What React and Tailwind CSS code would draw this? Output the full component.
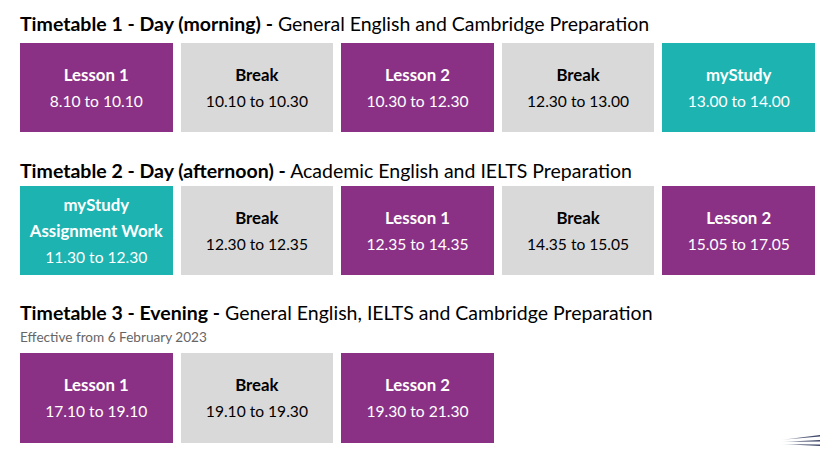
import React from "react";

const PURPLE = "bg-[#8a3186] text-white";
const GRAY = "bg-[#d9d9d9] text-black";
const TEAL = "bg-[#1db3b1] text-white";

function Box({ kind, title, lines = [], time }) {
  const cls = kind === "p" ? PURPLE : kind === "t" ? TEAL : GRAY;
  return (
    <div className={`${cls} flex flex-col items-center justify-center text-center`}>
      {[title, ...lines].map((l, i) => (
        <div key={i} className="font-bold text-[16.8px] leading-[26px]">{l}</div>
      ))}
      <div className="text-[15.6px] leading-[26px]">{time}</div>
    </div>
  );
}

function Heading({ bold, rest }) {
  return (
    <div className="text-[19.5px] leading-[24px] text-black">
      <span className="font-bold">{bold}</span>
      <span> {rest}</span>
    </div>
  );
}

export default function App() {
  return (
    <div
      className="relative w-[820px] h-[452px] bg-white overflow-hidden px-[20px] pt-[12px]"
      style={{ fontFamily: "Lato, 'Liberation Sans', sans-serif" }}
    >
      <Heading bold="Timetable 1 - Day (morning) -" rest="General English and Cambridge Preparation" />
      <div className="mt-[7px] grid grid-cols-5 gap-[8px] w-[795px] h-[89px]">
        <Box kind="p" title="Lesson 1" time="8.10 to 10.10" />
        <Box kind="g" title="Break" time="10.10 to 10.30" />
        <Box kind="p" title="Lesson 2" time="10.30 to 12.30" />
        <Box kind="g" title="Break" time="12.30 to 13.00" />
        <Box kind="t" title="myStudy" time="13.00 to 14.00" />
      </div>

      <div className="mt-[27px]">
        <Heading bold="Timetable 2 - Day (afternoon) -" rest="Academic English and IELTS Preparation" />
      </div>
      <div className="mt-[3px] grid grid-cols-5 gap-[8px] w-[795px] h-[89px]">
        <Box kind="t" title="myStudy" lines={["Assignment Work"]} time="11.30 to 12.30" />
        <Box kind="g" title="Break" time="12.30 to 12.35" />
        <Box kind="p" title="Lesson 1" time="12.35 to 14.35" />
        <Box kind="g" title="Break" time="14.35 to 15.05" />
        <Box kind="p" title="Lesson 2" time="15.05 to 17.05" />
      </div>

      <div className="mt-[26px]">
        <Heading bold="Timetable 3 - Evening -" rest="General English, IELTS and Cambridge Preparation" />
      </div>
      <div className="mt-[2px] text-[13.6px] leading-[20px] text-[#666666]">Effective from 6 February 2023</div>
      <div className="mt-[6px] grid grid-cols-5 gap-[8px] w-[795px] h-[90px]">
        <Box kind="p" title="Lesson 1" time="17.10 to 19.10" />
        <Box kind="g" title="Break" time="19.10 to 19.30" />
        <Box kind="p" title="Lesson 2" time="19.30 to 21.30" />
      </div>

      <svg className="absolute right-0 bottom-[4px]" width="40" height="16" viewBox="0 0 40 16">
        <defs>
          <linearGradient id="g" x1="0" x2="1" y1="0" y2="0">
            <stop offset="0" stopColor="#3a4366" stopOpacity="0" />
            <stop offset="0.5" stopColor="#3a4366" stopOpacity="0.8" />
            <stop offset="1" stopColor="#3a4366" stopOpacity="1" />
          </linearGradient>
        </defs>
        <path d="M0 8 L40 3 L40 4.5 Z" fill="url(#g)" />
        <path d="M0 10 L40 8 L40 9.5 Z" fill="url(#g)" />
        <path d="M0 12 L40 12.5 L40 14 Z" fill="url(#g)" />
      </svg>
    </div>
  );
}
